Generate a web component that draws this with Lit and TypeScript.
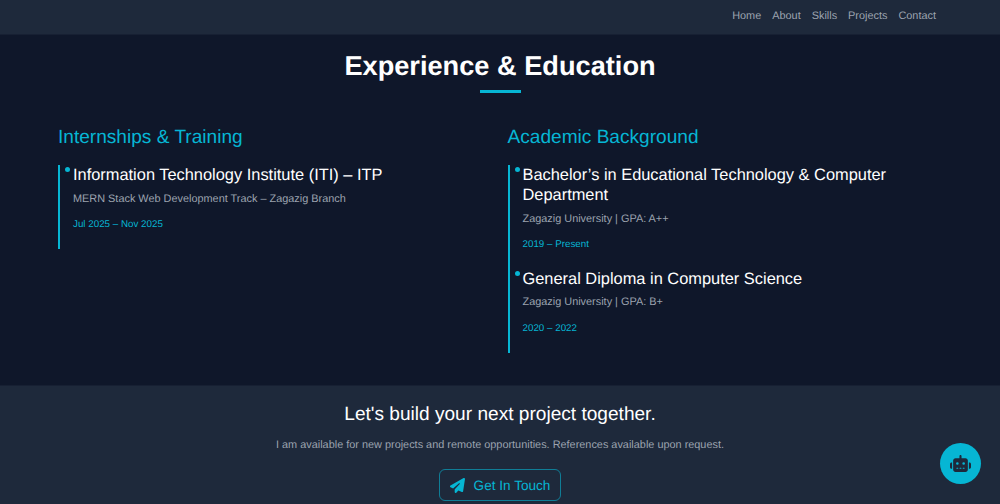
import {html, css, LitElement} from 'lit';
import {customElement} from 'lit/decorators.js';

const links = ['Home', 'About', 'Skills', 'Projects', 'Contact'];

const training = [
  {title: 'Information Technology Institute (ITI) – ITP', sub: 'MERN Stack Web Development Track – Zagazig Branch', date: 'Jul 2025 – Nov 2025'},
];

const academic = [
  {title: 'Bachelor’s in Educational Technology & Computer Department', sub: 'Zagazig University | GPA: A++', date: '2019 – Present'},
  {title: 'General Diploma in Computer Science', sub: 'Zagazig University | GPA: B+', date: '2020 – 2022'},
];

@customElement('app-root')
export class AppRoot extends LitElement {
  static styles = css`
    :host {
      display: block;
      height: 504px;
      overflow: hidden;
      position: relative;
      background: #0f172a;
      font-family: 'Liberation Sans', Arial, sans-serif;
      text-rendering: geometricPrecision;
    }

    nav {
      height: 35px;
      box-sizing: border-box;
      background: #1e293b;
      border-bottom: 1px solid #172033;
      display: flex;
      justify-content: flex-end;
      align-items: flex-start;
      gap: 11px;
      padding: 9px 64px 0 0;
    }

    nav a {
      color: #9ca3af;
      font-size: 10.9px;
      line-height: 14px;
    }

    main {
      height: 350px;
      box-sizing: border-box;
      padding: 14px 58px 0;
    }

    h1 {
      margin: 0;
      color: #fff;
      font-size: 27.2px;
      line-height: 34px;
      font-weight: 700;
      text-align: center;
    }

    .rule {
      width: 41px;
      height: 3px;
      margin: 7px auto 0;
      background: #06b6d4;
    }

    .cols {
      display: grid;
      grid-template-columns: 1fr 1fr;
      column-gap: 15px;
      margin-top: 33px;
    }

    h2 {
      margin: 0 0 16px;
      color: #06b6d4;
      font-size: 19.1px;
      line-height: 24px;
      font-weight: 400;
    }

    .list {
      border-left: 2px solid #06b6d4;
      padding: 0 0 18px 13px;
    }

    .item {
      position: relative;
      margin-bottom: 18.5px;
    }

    .item:last-child {
      margin-bottom: 0;
    }

    .item::before {
      content: '';
      position: absolute;
      left: -8px;
      top: 2px;
      width: 5px;
      height: 5px;
      border-radius: 50%;
      background: #06b6d4;
    }

    h3 {
      margin: -1px 0 0;
      color: #fff;
      font-size: 16.4px;
      line-height: 20px;
      font-weight: 400;
    }

    .sub {
      margin: 6.5px 0 0;
      color: #9ca3af;
      font-size: 10.9px;
      line-height: 14px;
    }

    .date {
      margin: 13.5px 0 0;
      color: #06b6d4;
      font-size: 9.8px;
      line-height: 12px;
    }

    footer {
      height: 119px;
      box-sizing: border-box;
      background: #1e293b;
      border-top: 1px solid #172033;
      padding-top: 17px;
      text-align: center;
    }

    footer h2 {
      margin: 0;
      color: #fff;
      line-height: 24px;
    }

    footer p {
      margin: 11px 0 0;
      color: #9ca3af;
      font-size: 10.9px;
      line-height: 14px;
    }

    .cta {
      display: inline-flex;
      align-items: center;
      box-sizing: border-box;
      gap: 9px;
      margin-top: 17px;
      height: 32px;
      padding: 0 10px;
      border: 1px solid rgba(6, 182, 212, 0.6);
      border-radius: 6px;
      color: #06b6d4;
      font-size: 13.6px;
    }

    .cta svg {
      width: 15px;
      height: 15px;
      fill: #06b6d4;
    }

    .bot {
      position: absolute;
      right: 19px;
      bottom: 20px;
      width: 41px;
      height: 41px;
      border-radius: 50%;
      background: #06b6d4;
      display: flex;
      align-items: center;
      justify-content: center;
    }

    .bot svg {
      width: 21px;
      height: 17px;
      fill: #1e293b;
    }
  `;

  renderItem(item: {title: string; sub: string; date: string}) {
    return html`
      <div class="item">
        <h3>${item.title}</h3>
        <p class="sub">${item.sub}</p>
        <p class="date">${item.date}</p>
      </div>
    `;
  }

  render() {
    return html`
      <nav>${links.map(l => html`<a>${l}</a>`)}</nav>
      <main>
        <h1>Experience &amp; Education</h1>
        <div class="rule"></div>
        <div class="cols">
          <section>
            <h2>Internships &amp; Training</h2>
            <div class="list">${training.map(i => this.renderItem(i))}</div>
          </section>
          <section>
            <h2>Academic Background</h2>
            <div class="list">${academic.map(i => this.renderItem(i))}</div>
          </section>
        </div>
      </main>
      <footer>
        <h2>Let's build your next project together.</h2>
        <p>I am available for new projects and remote opportunities. References available upon request.</p>
        <a class="cta">
          <svg viewBox="0 0 512 512"><path d="M498.100 5.600c10.100 7 15.400 19.100 13.500 31.200l-64 416c-1.500 9.700-7.400 18.200-16 23s-18.900 5.400-28 1.600L284 427.700l-68.500 74.100c-8.900 9.700-22.900 12.900-35.200 8.100S160 493.200 160 480V396.400c0-4 1.500-7.800 4.200-10.700L331.800 202.800c5.800-6.300 5.600-16-.4-22s-15.700-6.400-22-.7L106 360.800 17.700 316.600C7.100 311.300 .3 300.700 0 288.900s5.900-22.800 16.100-28.700l448-256c10.700-6.100 23.900-5.500 34 1.400z"/></svg>
          Get In Touch
        </a>
      </footer>
      <div class="bot">
        <svg viewBox="0 0 640 512"><path d="M320 0c17.700 0 32 14.300 32 32V96H472c39.800 0 72 32.200 72 72V440c0 39.800-32.200 72-72 72H168c-39.800 0-72-32.200-72-72V168c0-39.800 32.200-72 72-72H288V32c0-17.700 14.300-32 32-32zM208 384c-8.800 0-16 7.200-16 16s7.200 16 16 16h32c8.800 0 16-7.200 16-16s-7.200-16-16-16H208zm96 0c-8.800 0-16 7.200-16 16s7.200 16 16 16h32c8.800 0 16-7.200 16-16s-7.200-16-16-16H304zm96 0c-8.800 0-16 7.200-16 16s7.200 16 16 16h32c8.800 0 16-7.200 16-16s-7.200-16-16-16H400zM264 256a40 40 0 1 0 -80 0 40 40 0 1 0 80 0zm152 40a40 40 0 1 0 0-80 40 40 0 1 0 0 80zM48 224H64V416H48c-26.500 0-48-21.500-48-48V272c0-26.500 21.500-48 48-48zm544 0c26.500 0 48 21.500 48 48v96c0 26.500-21.500 48-48 48H576V224h16z"/></svg>
      </div>
    `;
  }
}
